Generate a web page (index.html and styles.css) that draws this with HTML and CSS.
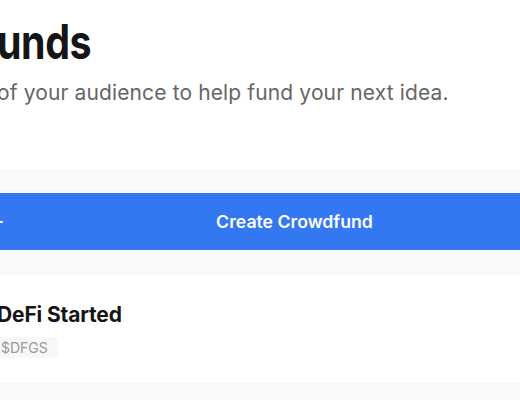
FILE: index.html
```html
<!DOCTYPE html>
<html lang="en">
<head>
<meta charset="utf-8">
<title>Crowdfunds</title>
<link rel="stylesheet" href="styles.css">
</head>
<body>
<header class="intro">
  <h1 class="title">unds</h1>
  <p class="subtitle">of your audience to help fund your next idea.</p>
</header>
<section class="actions">
  <button class="create-btn" type="button">
    <svg class="plus" viewBox="0 0 16 16" width="16" height="16" aria-hidden="true">
      <path d="M8 2v12M2 8h12" stroke="#fff" stroke-width="2" stroke-linecap="round" fill="none"/>
    </svg>
    <span class="create-label">Create Crowdfund</span>
    <span class="spacer"></span>
  </button>
</section>
<article class="card">
  <h2 class="card-title">DeFi Started</h2>
  <span class="tag">$DFGS</span>
</article>
<section class="more"></section>
</body>
</html>
```
FILE: styles.css
```css
html, body {
  margin: 0;
  padding: 0;
  background: #ffffff;
  font-family: Inter, "Noto Sans", "Liberation Sans", sans-serif;
  overflow: hidden;
}

.intro {
  padding: 13px 0 0 0;
  margin-left: -3px;
  height: 156px;
  box-sizing: border-box;
}

.title {
  margin: 0;
  font-size: 48px;
  line-height: 58px;
  font-weight: 700;
  color: #151515;
  letter-spacing: -0.5px;
  transform: scaleX(0.82);
  transform-origin: 0 50%;
}

.subtitle {
  margin: 8px 0 0 0;
  font-size: 21px;
  line-height: 28px;
  letter-spacing: 0.13px;
  color: #666666;
}

.actions {
  background: #f9f9f9;
  padding: 24px 0 25px 0;
  margin-top: 13px;
}

.create-btn {
  display: grid;
  grid-template-columns: 16px 1fr 16px;
  align-items: center;
  margin-left: -30px;
  width: 649px;
  height: 57px;
  padding: 0 18px;
  border: none;
  border-radius: 6px;
  background: #3378f0;
  color: #ffffff;
  font-family: inherit;
  font-size: 17.7px;
  font-weight: 600;
  box-sizing: border-box;
}

.plus {
  display: block;
}

.create-label {
  text-align: center;
}

.card {
  background: #ffffff;
  padding: 26px 0 25px 0;
  margin-left: -3px;
}

.card-title {
  margin: 0 0 8px 0;
  font-size: 21px;
  line-height: 28px;
  font-weight: 700;
  letter-spacing: -0.15px;
  color: #151515;
}

.tag {
  display: inline-block;
  margin-left: -6px;
  padding: 0 10px 0 10px;
  height: 21px;
  line-height: 21px;
  font-size: 14px;
  color: #9a9a9a;
  background: #f7f7f7;
  border-radius: 4px;
}

.more {
  background: #f9f9f9;
  height: 60px;
}
```
